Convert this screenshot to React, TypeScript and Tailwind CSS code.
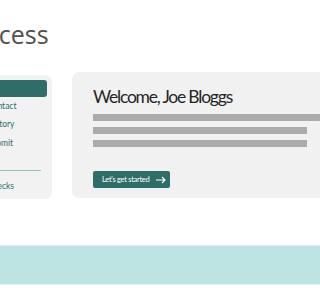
import React from "react";

export default function App() {
  const body = { fontFamily: "Lato, 'Open Sans', sans-serif" };
  return (
    <div className="w-[320px] h-[290px] overflow-hidden bg-white relative" style={body}>
      <div className="pt-[18px] ml-[-29px] h-[72px]">
        <h1
          className="text-[25px] leading-[32px] text-[#505050] whitespace-nowrap"
          style={{ fontFamily: "'Open Sans', sans-serif" }}
        >
          Access
        </h1>
      </div>
      <div className="flex items-start gap-[20px]">
        <div className="flex-none ml-[-110px] w-[162px] mt-[3px] h-[124px] bg-[#f2f2f2] rounded-[7px] p-[5px] flex flex-col">
          <div className="h-[17px] rounded-[3px] bg-[#2e6e68]" />
          <div className="h-[18px] flex items-center pl-[92px] text-[8.5px] text-[#2e6e68] whitespace-nowrap">Contact</div>
          <div className="h-[19px] flex items-center pl-[92px] text-[8.5px] text-[#2e6e68] whitespace-nowrap">History</div>
          <div className="h-[18px] flex items-center pl-[92px] text-[8.5px] text-[#2e6e68] whitespace-nowrap">Submit</div>
          <div className="h-[19px] flex items-end">
            <div className="w-full h-px bg-[#8fc4c0] mr-[6px]" />
          </div>
          <div className="mt-[8px] h-[14px] flex items-center pl-[92px] text-[8.5px] text-[#2e6e68] whitespace-nowrap">Checks</div>
        </div>
        <div className="flex-none w-[300px] h-[126px] bg-[#f1f1f1] rounded-[7px] pl-[21px] pt-[13px]">
          <h2 className="text-[17.5px] leading-[23px] text-[#262626] tracking-[-1.2px] whitespace-nowrap">
            Welcome, Joe Bloggs
          </h2>
          <div className="mt-[6px] flex flex-col gap-[6px]">
            <div className="h-[7px] w-[260px] bg-[#ababab]" />
            <div className="h-[7px] w-[214px] bg-[#ababab]" />
            <div className="h-[7px] w-[214px] bg-[#ababab]" />
          </div>
          <button className="mt-[24px] w-[77px] h-[17px] rounded-[2px] bg-[#2e6e68] text-white text-[7.5px] flex items-center pl-[9px] gap-[7px] whitespace-nowrap">
            <span className="tracking-[-0.3px]">Let's get started</span>
            <svg width="10" height="8" viewBox="0 0 10 8" fill="none" stroke="white" strokeWidth="1.2">
              <path d="M0 4h9M6 1l3 3-3 3" />
            </svg>
          </button>
        </div>
      </div>
      <div className="mt-[46px] border-t border-b border-[#e3f2f2] h-[40px] bg-[#bde3e2]" />
    </div>
  );
}
